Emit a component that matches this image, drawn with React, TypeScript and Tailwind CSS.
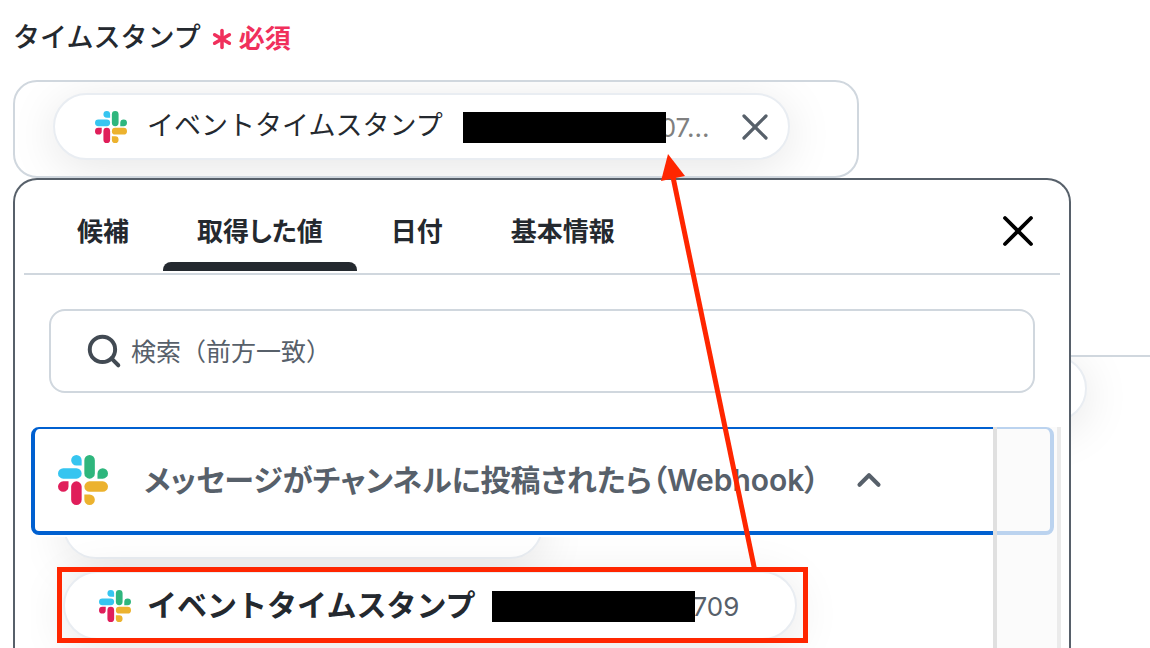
import type { ReactNode } from 'react';
import { Asterisk, ChevronUp, Search, X } from 'lucide-react';

const tabs = ['候補', '取得した値', '日付', '基本情報'];
const activeTab = '取得した値';

const SlackLogo = ({ className }: { className: string }) => (
  <svg viewBox="0 0 24 24" className={className} aria-hidden="true">
    <path
      fill="#36c5f0"
      d="M8.834 5.042a2.528 2.528 0 0 1-2.521-2.52A2.528 2.528 0 0 1 8.834 0a2.528 2.528 0 0 1 2.521 2.522v2.52H8.834zM8.834 6.313a2.528 2.528 0 0 1 2.521 2.521 2.528 2.528 0 0 1-2.521 2.521H2.522A2.528 2.528 0 0 1 0 8.834a2.528 2.528 0 0 1 2.522-2.521h6.312z"
    />
    <path
      fill="#2eb67d"
      d="M18.956 8.834a2.528 2.528 0 0 1 2.522-2.521A2.528 2.528 0 0 1 24 8.834a2.528 2.528 0 0 1-2.522 2.521h-2.522V8.834zM17.688 8.834a2.528 2.528 0 0 1-2.523 2.521 2.527 2.527 0 0 1-2.52-2.521V2.522A2.527 2.527 0 0 1 15.165 0a2.528 2.528 0 0 1 2.523 2.522v6.312z"
    />
    <path
      fill="#ecb22e"
      d="M15.165 18.956a2.528 2.528 0 0 1 2.523 2.522A2.528 2.528 0 0 1 15.165 24a2.527 2.527 0 0 1-2.52-2.522v-2.522h2.52zM15.165 17.688a2.527 2.527 0 0 1-2.52-2.523 2.526 2.526 0 0 1 2.52-2.52h6.313A2.527 2.527 0 0 1 24 15.165a2.528 2.528 0 0 1-2.522 2.523h-6.313z"
    />
    <path
      fill="#e01e5a"
      d="M5.042 15.165a2.528 2.528 0 0 1-2.52 2.523A2.528 2.528 0 0 1 0 15.165a2.527 2.527 0 0 1 2.522-2.52h2.52v2.52zM6.313 15.165a2.527 2.527 0 0 1 2.521-2.52 2.527 2.527 0 0 1 2.521 2.52v6.313A2.528 2.528 0 0 1 8.834 24a2.528 2.528 0 0 1-2.521-2.522v-6.313z"
    />
  </svg>
);

// Black bar over the private part of a value, only the tail stays readable
const MaskedValue = ({ children, className }: { children: ReactNode; className: string }) => (
  <span className="flex items-center pt-0.5 text-[26px]">
    <span className="relative z-10 h-[31px] w-[203px] bg-black" />
    <span className={className}>{children}</span>
  </span>
);

const FieldValue = () => (
  <div
    role="group"
    aria-labelledby="timestamp-label"
    className="flex h-[98px] w-4/5 items-start overflow-hidden rounded-3xl border-2 border-[#d0d7de] pt-[11px] pl-[38px]"
  >
    <div className="flex h-[67px] items-center rounded-full border-2 border-[#e9edf2] bg-white pr-[11px] pl-10 shadow-[0_8px_48px_rgba(0,0,0,0.1)]">
      <SlackLogo className="size-8" />
      <span className="ml-5 text-[27px] text-[#24292f]">イベントタイムスタンプ</span>
      <span className="ml-5">
        <MaskedValue className="-ml-1.5 text-[#808080]">07...</MaskedValue>
      </span>
      <button type="button" aria-label="値を削除" className="ml-[23px]">
        <X className="size-11 text-[#57606a]" strokeWidth={1.75} />
      </button>
    </div>
  </div>
);

const TabBar = () => (
  <div className="mx-[9px] flex h-[95px] items-stretch justify-between border-b-2 border-[#d0d7de] pr-4 pl-[19px] [font-feature-settings:'palt']">
    <div role="tablist" className="flex">
      {tabs.map((tab) => (
        <button
          key={tab}
          type="button"
          role="tab"
          aria-selected={tab === activeTab}
          className="flex flex-col text-[26px] font-semibold text-[#24292f]"
        >
          <span className="flex h-[82px] items-center px-[34px] pt-5">{tab}</span>
          {tab === activeTab && <span className="h-[9px] w-full rounded-t-lg bg-[#24292f]" />}
        </button>
      ))}
    </div>
    <button type="button" aria-label="閉じる" className="pt-2">
      <X className="size-[52px] text-black" strokeWidth={1.75} />
    </button>
  </div>
);

const SearchBox = () => (
  <label className="mx-[34px] mt-[34px] flex h-[84px] shrink-0 items-center gap-2 rounded-2xl border-2 border-[#d0d7de] pl-[34px]">
    <Search className="size-10 text-[#424a53]" strokeWidth={2.5} />
    <input
      type="search"
      aria-label="検索"
      placeholder="検索（前方一致）"
      className="w-full bg-transparent pt-1 text-[25px] outline-none placeholder:text-[#57606a]"
    />
  </label>
);

const StepList = () => (
  <div className="relative mt-[34px] mr-2 ml-4 flex-1 overflow-hidden">
    <button
      type="button"
      aria-expanded="true"
      className="relative z-10 flex h-[108px] w-[calc(100%-7px)] items-center rounded-lg border-4 border-t-2 border-[#0060d0] bg-white pl-[23px] text-[#57606a] shadow-[0_2px_0_#fff]"
    >
      <SlackLogo className="size-[50px]" />
      <span className="ml-9 text-[30px] font-semibold [font-feature-settings:'palt']">
        メッセージがチャンネルに投稿されたら（Webhook）
      </span>
      <ChevronUp className="ml-[31px] size-[38px]" strokeWidth={2.6} />
    </button>

    <div className="flex flex-col items-start gap-3 pl-8">
      <div className="-mt-[42px] h-[66px] w-[480px] rounded-full border-2 border-[#e9edf2] bg-white shadow-[0_8px_48px_rgba(0,0,0,0.1)]" />
      <button
        type="button"
        className="flex h-[69px] items-center rounded-full border-2 border-[#e9edf2] bg-white pr-14 pl-[34px] shadow-[0_8px_48px_rgba(0,0,0,0.1)]"
      >
        <SlackLogo className="size-8" />
        <span className="ml-4 text-[30px] font-semibold text-[#24292f]">イベントタイムスタンプ</span>
        <span className="ml-4">
          <MaskedValue className="-ml-0.5 text-[#57606a]">709</MaskedValue>
        </span>
      </button>
    </div>

    {/* scroll track, lies over the end of the rows */}
    <div className="absolute inset-y-0 right-0 z-20 w-[68px] border-x-4 border-l-[#e0e0e0] border-r-[#ebebeb] bg-[#f9f9f9]/75" />
  </div>
);

const Annotation = () => (
  <svg className="pointer-events-none absolute top-0 left-0 z-30 h-[648px] w-[1150px]" aria-hidden="true">
    <rect x="59.5" y="569.5" width="746" height="71" fill="none" stroke="#ff2600" strokeWidth="5" />
    <line x1="754.5" y1="569" x2="673" y2="177" stroke="#ff2600" strokeWidth="5" />
    <polygon points="668,154 661,181 685,176" fill="#ff2600" />
  </svg>
);

const App = () => {
  return (
    <main className="relative flex h-screen flex-col overflow-hidden bg-white pr-[79px] pl-[13px] font-['Inter','Noto_Sans_CJK_JP',sans-serif]">
      <div className="flex items-center pt-[17px] pb-[21px] leading-10">
        <span id="timestamp-label" className="text-[27px] font-medium text-[#24292f]">
          タイムスタンプ
        </span>
        <span className="ml-1 flex items-center pt-0.5 text-[26px] font-semibold text-[#f0305c]">
          <Asterisk className="size-[34px]" strokeWidth={2.5} />
          必須
        </span>
      </div>

      <FieldValue />

      {/* neighbouring field that sticks out behind the panel */}
      <div className="absolute top-[355px] right-0 bottom-0 left-1/2 flex items-start justify-end overflow-hidden border-t-2 border-[#d0d7de] pr-[63px]">
        <div className="-mt-[2px] h-[67px] w-96 rounded-full border-2 border-[#e9edf2] bg-white shadow-[0_8px_48px_rgba(0,0,0,0.1)]" />
      </div>

      <section className="relative flex flex-1 flex-col rounded-t-3xl border-2 border-b-0 border-[#57606a] bg-white">
        <TabBar />
        <SearchBox />
        <StepList />
      </section>

      <Annotation />
    </main>
  );
};

export default App;
